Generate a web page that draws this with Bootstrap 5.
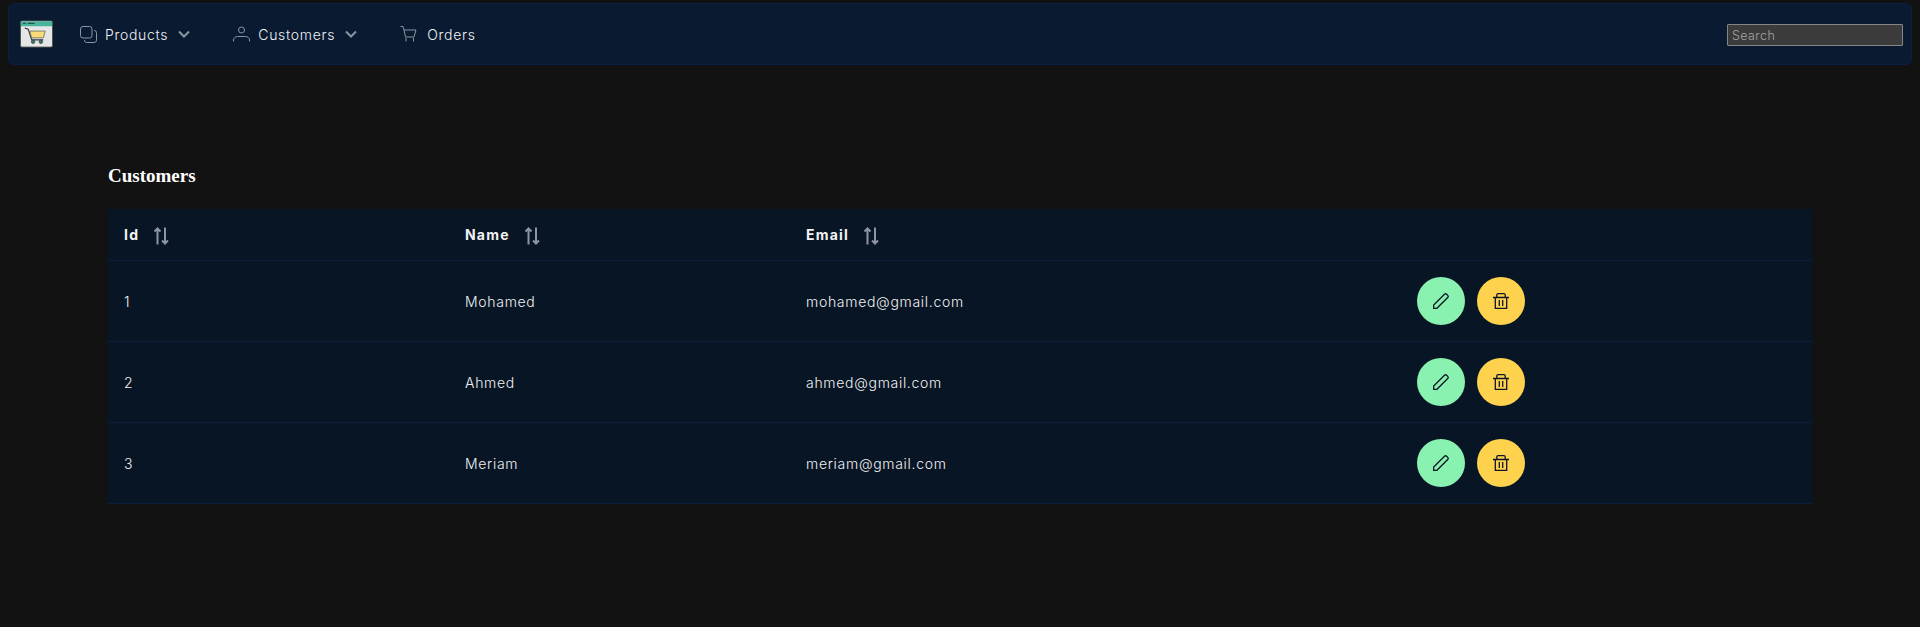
<!DOCTYPE html>
<html lang="en">
<head>
  <meta charset="UTF-8" />
  <title>Customers</title>
  <link href="https://cdn.jsdelivr.net/npm/bootstrap@5.3.0/dist/css/bootstrap.min.css" rel="stylesheet" />
  <style>
    html, body {
      height: 100%;
    }
    body {
      background-color: #121212;
      color: #e3e3e3;
      font-family: "Inter", sans-serif;
      font-weight: 300;
      font-size: 14px;
      letter-spacing: .7px;
      padding: 3px 8px 0;
      overflow: hidden;
    }
    .top-bar {
      height: 62px;
      background-color: #091a31;
      border: 1px solid #0a2040;
      border-radius: 6px;
      padding: 0 8px 0 11px;
    }
    .brand-logo {
      width: 33px;
      height: 28px;
      margin-right: 27px;
    }
    .top-link {
      color: #f0f2f5;
      text-decoration: none;
      font-size: 14px;
      display: flex;
      align-items: center;
      gap: 10px;
      margin-right: 43px;
    }
    .top-link svg {
      color: #8b95a3;
      flex: none;
    }
    .link-label {
      margin-left: -2px;
    }
    .search-box {
      width: 176px;
      height: 22px;
      margin-top: 2px;
      background-color: #3b3b3b;
      border: 1px solid #858585;
      border-radius: 1px;
      color: #fff;
      font-family: "Inter", sans-serif;
      font-weight: 300;
      font-size: 12.5px;
      letter-spacing: .4px;
      padding: 0 4px;
      outline: none;
    }
    .search-box::placeholder {
      color: #a4a4a4;
      opacity: 1;
    }
    .page-body {
      padding: 0 100px;
    }
    .page-title {
      font-family: "Liberation Serif", serif;
      font-weight: 700;
      font-size: 19px;
      line-height: 22px;
      letter-spacing: 0;
      color: #fff;
      margin: 100px 0 22px;
    }
    .cust-table {
      --bs-table-bg: #081525;
      --bs-table-color: #f2f2f2;
      --bs-table-border-color: #0b1f3d;
      width: 100%;
      table-layout: fixed;
      margin: 0;
    }
    .cust-table th {
      height: 51px;
      padding: 0 16px;
      vertical-align: middle;
      font-weight: 700;
      font-size: 14px;
      letter-spacing: 1.2px;
    }
    .cust-table td {
      height: 81px;
      padding: 1px 16px 0;
      vertical-align: middle;
      font-size: 14px;
    }
    .sort-icon {
      color: #8d95a0;
      margin-left: 15px;
    }
    .action-cell {
      gap: 12px;
      margin-top: -1px;
    }
    .round-btn {
      width: 48px;
      height: 48px;
      border-radius: 50%;
      border: 0;
      padding: 0;
      color: #0c1626;
      display: inline-flex;
      align-items: center;
      justify-content: center;
    }
    .btn-edit {
      background-color: #8af2b0;
    }
    .btn-remove {
      background-color: #ffd24d;
    }
  </style>
</head>
<body>

<nav class="top-bar d-flex align-items-center">
  <svg class="brand-logo" viewBox="0 0 34 28">
    <rect x="0.500" y="0.500" width="33" height="27" rx="1.500" fill="#e6e6e6" stroke="#4a5056"/>
    <rect x="1" y="1" width="32" height="5" fill="#48b59b"/>
    <path d="M3 3h3M8 3h7" stroke="#1d3a3a" stroke-width="1"/>
    <path d="M5 8l3.500 1 3.500 11h12" fill="none" stroke="#3a3f45" stroke-width="1.200"/>
    <path d="M10 11h16l-2 7H12z" fill="#f7dc78" stroke="#3a3f45" stroke-width=".6"/>
    <circle cx="13.500" cy="22" r="1.800" fill="#3a7d6e" stroke="#2b3038" stroke-width=".7"/>
    <circle cx="21.500" cy="22" r="1.800" fill="#3a7d6e" stroke="#2b3038" stroke-width=".7"/>
  </svg>
  <a href="#" class="top-link">
    <svg width="17" height="17" viewBox="0 0 17 17" fill="none" stroke="currentColor" stroke-width="1">
      <rect x="0.500" y="0.500" width="11.500" height="11.500" rx="2.500"/>
      <path d="M14 4.500h0.200a2.300 2.300 0 0 1 2.300 2.300v7.400a2.300 2.300 0 0 1-2.300 2.300H6.800a2.300 2.300 0 0 1-2.300-2.300V14"/>
    </svg>
    <span class="link-label">Products</span>
    <svg width="12" height="8" viewBox="0 0 12 8" fill="none" stroke="currentColor" stroke-width="2"><path d="M1 1.500l5 5 5-5"/></svg>
  </a>
  <a href="#" class="top-link">
    <svg width="17" height="17" viewBox="0 0 17 17" fill="none" stroke="currentColor" stroke-width="1">
      <circle cx="8.500" cy="4" r="3"/>
      <path d="M.5 15.500v-1.500c0-2 2-3.500 4-3.500h8c2 0 4 1.500 4 3.500v1.500"/>
    </svg>
    <span class="link-label">Customers</span>
    <svg width="12" height="8" viewBox="0 0 12 8" fill="none" stroke="currentColor" stroke-width="2"><path d="M1 1.500l5 5 5-5"/></svg>
  </a>
  <a href="#" class="top-link">
    <svg width="17" height="17" viewBox="0 0 17 17" fill="none" stroke="currentColor" stroke-width="1">
      <path d="M.5 .5h2.500l1 3.500 1.500 7h8.500l2-7H4"/>
      <path d="M6 12v3.500M13.500 12v3.500"/>
    </svg>
    <span>Orders</span>
  </a>
  <input type="text" class="search-box ms-auto" placeholder="Search" />
</nav>

<div class="page-body">
  <h3 class="page-title">Customers</h3>
  <table class="table cust-table">
    <colgroup>
      <col style="width: 341px" />
      <col style="width: 341px" />
      <col style="width: 611px" />
      <col />
    </colgroup>
    <thead>
      <tr>
        <th>Id<svg class="sort-icon" width="15" height="18" viewBox="0 0 15 18" fill="none" stroke="currentColor" stroke-width="2"><path d="M3.500 17.500V1.500M.5 4.500l3-3 3 3"/><path d="M11 .5v16M8 13.500l3 3 3-3"/></svg></th>
        <th>Name<svg class="sort-icon" width="15" height="18" viewBox="0 0 15 18" fill="none" stroke="currentColor" stroke-width="2"><path d="M3.500 17.500V1.500M.5 4.500l3-3 3 3"/><path d="M11 .5v16M8 13.500l3 3 3-3"/></svg></th>
        <th>Email<svg class="sort-icon" width="15" height="18" viewBox="0 0 15 18" fill="none" stroke="currentColor" stroke-width="2"><path d="M3.500 17.500V1.500M.5 4.500l3-3 3 3"/><path d="M11 .5v16M8 13.500l3 3 3-3"/></svg></th>
        <th></th>
      </tr>
    </thead>
    <tbody id="custRows"></tbody>
  </table>
</div>

<script src="https://cdn.jsdelivr.net/npm/bootstrap@5.3.0/dist/js/bootstrap.bundle.min.js"></script>
<script>
  const customers = [
    { id: 1, name: 'Mohamed', email: 'mohamed@gmail.com' },
    { id: 2, name: 'Ahmed', email: 'ahmed@gmail.com' },
    { id: 3, name: 'Meriam', email: 'meriam@gmail.com' }
  ];
  const penIcon = '<svg width="16" height="16" viewBox="0 0 16 16" fill="none" stroke="currentColor" stroke-width="1.300"><path d="M.7 15.300v-3.200L11.500 1.300a1.500 1.500 0 0 1 2.100 0l1.100 1.100a1.500 1.500 0 0 1 0 2.100L3.900 15.300z"/></svg>';
  const binIcon = '<svg width="16" height="16" viewBox="0 0 16 16" fill="none" stroke="currentColor" stroke-width="1.300"><path d="M0 4.500h16M2.300 4.500v11h11.400v-11M3.800 4.500V2a1.300 1.300 0 0 1 1.300-1.300h5.800A1.300 1.300 0 0 1 12.200 2v2.500M6.300 7v6M9.700 7v6"/></svg>';

  document.getElementById('custRows').innerHTML = customers.map(c => `
    <tr>
      <td>${c.id}</td>
      <td>${c.name}</td>
      <td>${c.email}</td>
      <td>
        <div class="d-flex action-cell">
          <button class="round-btn btn-edit">${penIcon}</button>
          <button class="round-btn btn-remove">${binIcon}</button>
        </div>
      </td>
    </tr>`).join('');
</script>

</body>
</html>
